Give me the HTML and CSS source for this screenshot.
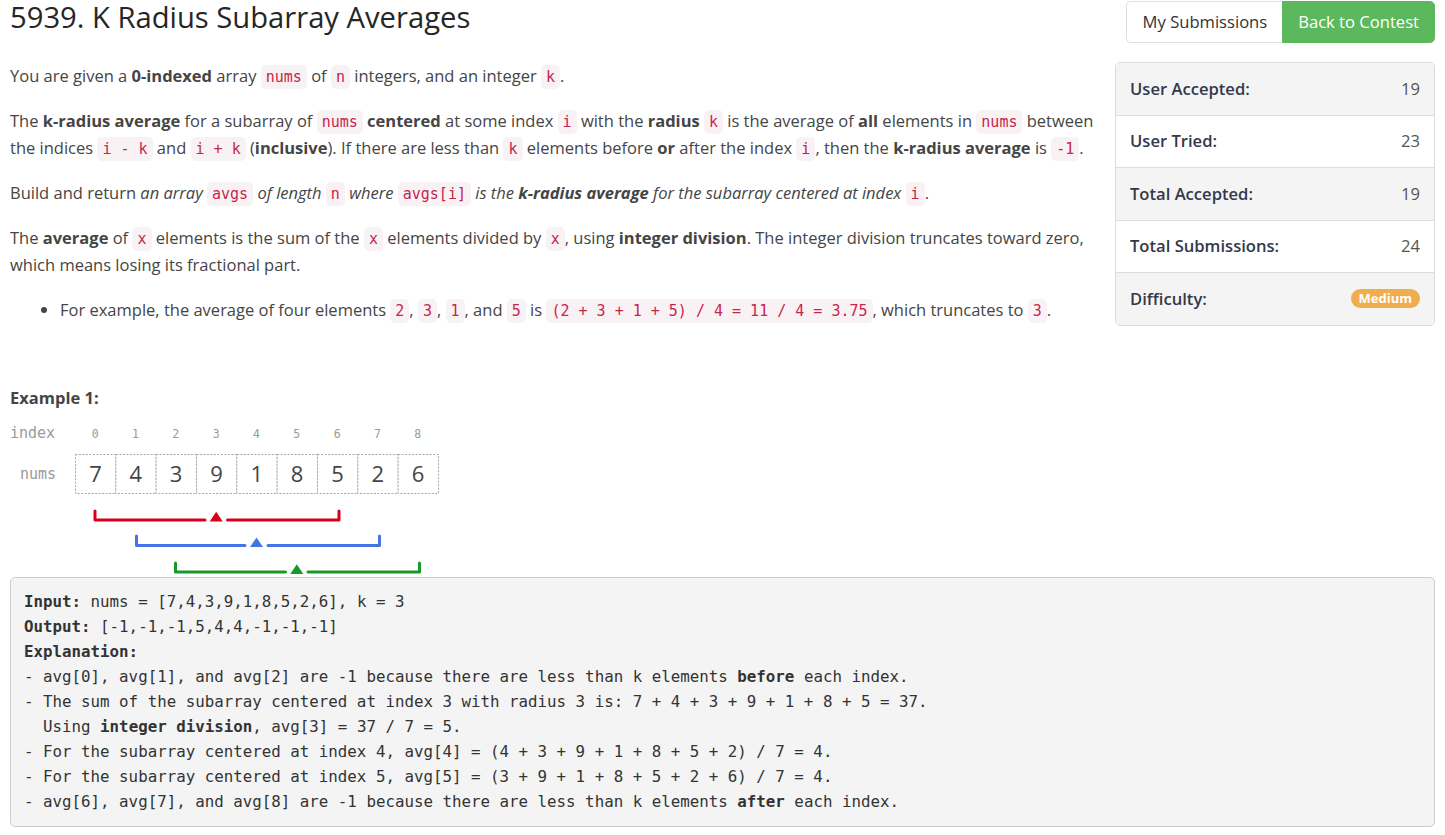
FILE: index.html
```html
<!DOCTYPE html>
<html lang="en">
<head>
<meta charset="utf-8">
<title>5939. K Radius Subarray Averages</title>
<link rel="stylesheet" href="styles.css">
</head>
<body>
<div class="page">
  <header class="top">
    <h1 class="title">5939. K Radius Subarray Averages</h1>
    <div class="btn-group">
      <a class="btn btn-default" href="#">My Submissions</a>
      <a class="btn btn-success" href="#">Back to Contest</a>
    </div>
  </header>

  <div class="main">
    <div class="desc">
      <p>You are given a <strong>0-indexed</strong> array <code>nums</code> of <code>n</code> integers, and an integer <code>k</code>.</p>
      <p>The <strong>k-radius average</strong> for a subarray of <code>nums</code> <strong>centered</strong> at some index <code>i</code> with the <strong>radius</strong> <code>k</code> is the average of <strong>all</strong> elements in <code>nums</code> between the indices <code>i - k</code> and <code>i + k</code> (<strong>inclusive</strong>). If there are less than <code>k</code> elements before <strong>or</strong> after the index <code>i</code>, then the <strong>k-radius average</strong> is <code>-1</code>.</p>
      <p>Build and return <em>an array </em><code>avgs</code><em> of length </em><code>n</code><em> where </em><code>avgs[i]</code><em> is the </em><strong><em>k-radius average</em></strong><em> for the subarray centered at index </em><code>i</code>.</p>
      <p>The <strong>average</strong> of <code>x</code> elements is the sum of the <code>x</code> elements divided by <code>x</code>, using <strong>integer division</strong>. The integer division truncates toward zero, which means losing its fractional part.</p>
      <ul>
        <li>For example, the average of four elements <code>2</code>, <code>3</code>, <code>1</code>, and <code>5</code> is <code>(2 + 3 + 1 + 5) / 4 = 11 / 4 = 3.75</code>, which truncates to <code>3</code>.</li>
      </ul>
    </div>

    <aside class="stats">
      <ul class="list-group">
        <li class="list-item"><span class="label">User Accepted:</span><span class="value">19</span></li>
        <li class="list-item"><span class="label">User Tried:</span><span class="value">23</span></li>
        <li class="list-item"><span class="label">Total Accepted:</span><span class="value">19</span></li>
        <li class="list-item"><span class="label">Total Submissions:</span><span class="value">24</span></li>
        <li class="list-item"><span class="label">Difficulty:</span><span class="badge">Medium</span></li>
      </ul>
    </aside>
  </div>

  <section class="example">
    <p class="ex-title"><strong>Example 1:</strong></p>
    <svg class="figure" width="440" height="157" viewBox="0 0 440 157" xmlns="http://www.w3.org/2000/svg">
      <g class="mono-label">
        <text x="0" y="18">index</text>
        <text x="10" y="59">nums</text>
      </g>
      <g class="idx">
        <text x="85.2" y="17.5">0</text>
        <text x="125.5" y="17.5">1</text>
        <text x="165.8" y="17.5">2</text>
        <text x="206.2" y="17.5">3</text>
        <text x="246.5" y="17.5">4</text>
        <text x="286.8" y="17.5">5</text>
        <text x="327.2" y="17.5">6</text>
        <text x="367.5" y="17.5">7</text>
        <text x="407.8" y="17.5">8</text>
      </g>
      <g class="cells">
        <rect x="65.5" y="34.5" width="40.33" height="39"/>
        <rect x="105.83" y="34.5" width="40.33" height="39"/>
        <rect x="146.16" y="34.5" width="40.33" height="39"/>
        <rect x="186.5" y="34.5" width="40.33" height="39"/>
        <rect x="226.83" y="34.5" width="40.33" height="39"/>
        <rect x="267.16" y="34.5" width="40.33" height="39"/>
        <rect x="307.5" y="34.5" width="40.33" height="39"/>
        <rect x="347.83" y="34.5" width="40.33" height="39"/>
        <rect x="388.16" y="34.5" width="40.33" height="39"/>
      </g>
      <g class="digits">
        <text x="85.5" y="62">7</text>
        <text x="125.8" y="62">4</text>
        <text x="166.1" y="62">3</text>
        <text x="206.5" y="62">9</text>
        <text x="246.8" y="62">1</text>
        <text x="287.1" y="62">8</text>
        <text x="327.5" y="62">5</text>
        <text x="367.8" y="62">2</text>
        <text x="408.1" y="62">6</text>
      </g>
      <g class="bracket red">
        <path d="M85 91 V100 H195 M217.5 100 H329 V91"/>
        <polygon points="199.7,101.5 206.2,91.7 212.7,101.5"/>
      </g>
      <g class="bracket blue">
        <path d="M126.5 116 V125.5 H235 M258 125.5 H369.5 V116"/>
        <polygon points="240,127 246.5,117.5 253,127"/>
      </g>
      <g class="bracket green">
        <path d="M165.5 143 V152 H275.5 M298 152 H409.5 V143"/>
        <polygon points="280.3,154 286.8,144.3 293.3,154"/>
      </g>
    </svg>
<pre><strong>Input:</strong> nums = [7,4,3,9,1,8,5,2,6], k = 3
<strong>Output:</strong> [-1,-1,-1,5,4,4,-1,-1,-1]
<strong>Explanation:</strong>
- avg[0], avg[1], and avg[2] are -1 because there are less than k elements <strong>before</strong> each index.
- The sum of the subarray centered at index 3 with radius 3 is: 7 + 4 + 3 + 9 + 1 + 8 + 5 = 37.
  Using <strong>integer division</strong>, avg[3] = 37 / 7 = 5.
- For the subarray centered at index 4, avg[4] = (4 + 3 + 9 + 1 + 8 + 5 + 2) / 7 = 4.
- For the subarray centered at index 5, avg[5] = (3 + 9 + 1 + 8 + 5 + 2 + 6) / 7 = 4.
- avg[6], avg[7], and avg[8] are -1 because there are less than k elements <strong>after</strong> each index.</pre>
  </section>
</div>
</body>
</html>
```

FILE: styles.css
```css
html, body {
  margin: 0;
  padding: 0;
  background: #ffffff;
}

body {
  font-family: "Open Sans", "Noto Sans", "Liberation Sans", sans-serif;
  font-size: 16.5px;
  line-height: 27px;
  color: #454545;
}

.page {
  padding: 0 10px;
}

/* Header */
.top {
  display: flex;
  justify-content: space-between;
  align-items: flex-start;
  height: 44px;
}

.title {
  margin: 0;
  font-size: 29.2px;
  line-height: 34px;
  font-weight: 500;
  color: #262626;
}

.btn-group {
  display: flex;
  margin-top: 1px;
}

.btn {
  display: block;
  height: 42px;
  box-sizing: border-box;
  line-height: 40px;
  font-size: 16.6px;
  text-decoration: none;
  border: 1px solid #dddddd;
}

.btn-default {
  color: #333333;
  background: #ffffff;
  border-radius: 5px 0 0 5px;
  border-right: none;
  padding: 0 15px 0 16px;
}

.btn-success {
  color: #ffffff;
  background: #5cb85c;
  border-color: #5cb85c;
  border-radius: 0 5px 5px 0;
  padding: 0 15px;
}

/* Main area */
.main {
  display: grid;
  grid-template-columns: 1fr 320px;
  column-gap: 5px;
  margin-top: 18px;
  align-items: start;
}

.desc p {
  margin: 0 0 18px;
}

.desc ul {
  margin: 0;
  padding-left: 50px;
}

code {
  font-family: "DejaVu Sans Mono", "Liberation Mono", monospace;
  font-size: 15px;
  line-height: 1;
  color: #c7254e;
  background: #f9f2f4;
  padding: 3px 5px;
  border-radius: 5px;
}

strong {
  font-weight: 700;
}

/* Stats panel */
.list-group {
  list-style: none;
  margin: 0;
  padding: 0;
  border: 1px solid #dddddd;
  border-radius: 5px;
  overflow: hidden;
}

.list-item {
  display: flex;
  justify-content: space-between;
  align-items: center;
  padding: 12.5px 14px;
  line-height: 26.5px;
  font-size: 16.6px;
  background: #ffffff;
}

.list-item + .list-item {
  border-top: 1px solid #dddddd;
}

.list-item:nth-child(odd) {
  background: #f4f4f4;
}

.label {
  font-weight: 600;
  color: #34384a;
}

.value {
  color: #555555;
}

.badge {
  display: inline-block;
  background: #f0ad4e;
  color: #ffffff;
  font-weight: 700;
  font-size: 13px;
  line-height: 19px;
  padding: 0 8px;
  border-radius: 10px;
}

/* Example */
.example {
  margin-top: 58px;
}

.ex-title {
  margin: 0 0 9px;
  color: #454545;
}

.figure {
  display: block;
}

.mono-label text {
  font-family: "DejaVu Sans Mono", monospace;
  font-size: 15px;
  fill: #9a9a9a;
}

.idx text {
  font-family: "DejaVu Sans Mono", monospace;
  font-size: 11.5px;
  fill: #9a9a9a;
  text-anchor: middle;
}

.cells rect {
  fill: #ffffff;
  stroke: #a8a8a8;
  stroke-width: 1;
  stroke-dasharray: 2 1.5;
}

.digits text {
  font-family: "Open Sans", sans-serif;
  font-size: 22px;
  fill: #444444;
  text-anchor: middle;
}

.bracket path {
  fill: none;
  stroke-width: 3;
  stroke-linecap: round;
  stroke-linejoin: round;
}

.red path { stroke: #d7001b; }
.red polygon { fill: #d7001b; }
.blue path { stroke: #4376e2; }
.blue polygon { fill: #4376e2; }
.green path { stroke: #189a2a; }
.green polygon { fill: #189a2a; }

pre {
  margin: 0;
  padding: 11px 13px 12px;
  background: #f4f4f4;
  border: 1px solid #cccccc;
  border-radius: 5px;
  font-family: "DejaVu Sans Mono", "Liberation Mono", monospace;
  font-size: 15.8px;
  line-height: 25px;
  color: #333333;
  white-space: pre;
  overflow: hidden;
}
```
